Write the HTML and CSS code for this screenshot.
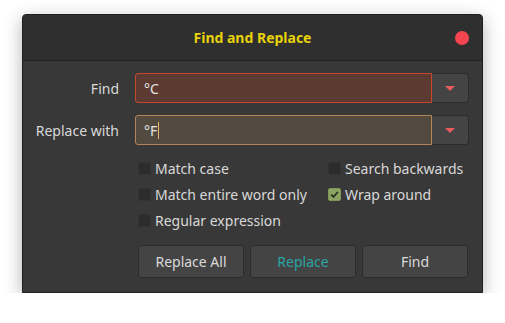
FILE: index.html
```html
<!DOCTYPE html>
<html lang="en">
<head>
  <meta charset="UTF-8" />
  <title>Find and Replace</title>
  <link rel="stylesheet" href="styles.css">
</head>
<body>

  <div class="window">
    <div class="titlebar">
      <span class="title">Find and Replace</span>
      <span class="close"></span>
    </div>

    <div class="content">
      <div class="form">
        <label class="label">Find</label>
        <div class="combo">
          <div class="field find">°C</div>
          <div class="drop"><span class="arrow"></span></div>
        </div>

        <label class="label">Replace with</label>
        <div class="combo">
          <div class="field replace">°F<span class="caret"></span></div>
          <div class="drop"><span class="arrow"></span></div>
        </div>
      </div>

      <div class="options">
        <div class="check"><span class="box"></span>Match case</div>
        <div class="check"><span class="box"></span>Search backwards</div>
        <div class="check"><span class="box"></span>Match entire word only</div>
        <div class="check"><span class="box checked">
          <svg width="9" height="9" viewBox="0 0 9 9"><path d="M1.2 4.6 L3.5 6.9 L7.8 2" fill="none" stroke="#2b2f25" stroke-width="1.8"/></svg>
        </span>Wrap around</div>
        <div class="check"><span class="box"></span>Regular expression</div>
      </div>

      <div class="buttons">
        <button>Replace All</button>
        <button class="accent">Replace</button>
        <button>Find</button>
      </div>
    </div>
  </div>

</body>
</html>
```

FILE: styles.css
```css
* {
  margin: 0;
  padding: 0;
  box-sizing: border-box;
}
body {
  background: #fff;
  font-family: 'Noto Sans', sans-serif;
  font-size: 14px;
  color: #dadada;
  padding: 14px 0 0 22px;
}
.window {
  width: 461px;
  height: 279px;
  background: #383838;
  border: 1px solid #1f1f1f;
  border-radius: 4px 4px 0 0;
  box-shadow: 0 5px 18px rgba(0,0,0,0.3);
  display: flex;
  flex-direction: column;
}
.titlebar {
  height: 46px;
  background: #2f2f2f;
  border-bottom: 1px solid #232323;
  border-radius: 4px 4px 0 0;
  display: flex;
  align-items: center;
  justify-content: center;
  position: relative;
}
.title {
  color: #e8d20b;
  font-weight: 700;
  font-size: 14px;
}
.close {
  position: absolute;
  right: 13px;
  top: 16px;
  width: 14px;
  height: 14px;
  border-radius: 50%;
  background: #f2454f;
}
.content {
  padding: 12px 13px 13px 0;
}
.form {
  display: grid;
  grid-template-columns: 96px 1fr;
  column-gap: 16px;
  row-gap: 12px;
  align-items: center;
}
.label {
  text-align: right;
  color: #d8d8d8;
}
.combo {
  display: flex;
  height: 30px;
}
.field {
  flex: 1;
  display: flex;
  align-items: center;
  padding-left: 8px;
  border: 1px solid;
  border-radius: 3px 0 0 3px;
  color: #e4e4e4;
}
.field.find {
  background: #5c3a31;
  border-color: #c8472c;
}
.field.replace {
  background: #534a3f;
  border-color: #b48655;
}
.caret {
  width: 1px;
  height: 17px;
  background: #e8b86a;
  margin-left: 1px;
}
.drop {
  width: 37px;
  background: #444;
  border: 1px solid #2c2c2c;
  border-left: none;
  border-radius: 0 4px 4px 0;
  display: flex;
  align-items: center;
  justify-content: center;
}
.arrow {
  width: 0;
  height: 0;
  border-left: 5px solid transparent;
  border-right: 5px solid transparent;
  border-top: 5px solid #e75a5e;
  margin-top: 1px;
}
.options {
  display: grid;
  grid-template-columns: 190px 1fr;
  row-gap: 8px;
  padding: 14px 0 0 115px;
}
.check {
  display: flex;
  align-items: center;
  gap: 4px;
  height: 18px;
  color: #d8d8d8;
}
.box {
  width: 13px;
  height: 13px;
  border-radius: 2px;
  background: #2c2c2c;
  border: 1px solid #333;
  display: flex;
  align-items: center;
  justify-content: center;
}
.box.checked {
  background: #8ba462;
  border-color: #7e9658;
}
.buttons {
  display: flex;
  gap: 6px;
  padding: 16px 0 0 115px;
}
button {
  width: 106px;
  height: 33px;
  background: #444;
  border: 1px solid #2c2c2c;
  border-radius: 3px;
  color: #dadada;
  font-family: 'Noto Sans', sans-serif;
  font-size: 14px;
}
button.accent {
  color: #29a5a5;
}
```
